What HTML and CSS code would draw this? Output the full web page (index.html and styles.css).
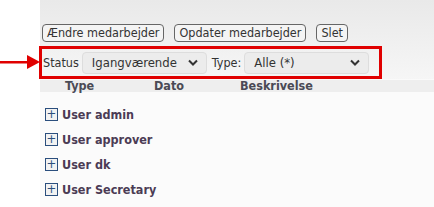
FILE: index.html
```html
<!DOCTYPE html>
<html lang="da">
<head>
    <meta charset="UTF-8">
    <title>Medarbejdere</title>
    <link rel="stylesheet" href="styles.css">
</head>
<body>
    <div class="gutter">
        <svg class="arrow" width="40" height="16" viewBox="0 0 40 16">
            <rect x="0" y="7" width="30" height="2.5" fill="#e00000"/>
            <polygon points="27,1 40,8 27,15" fill="#e00000"/>
        </svg>
    </div>
    <main class="content">
        <div class="toolbar">
            <button class="btn">Ændre medarbejder</button>
            <button class="btn">Opdater medarbejder</button>
            <button class="btn">Slet</button>
        </div>
        <div class="filters">
            <label for="status">Status</label>
            <select id="status" class="sel sel-status">
                <option>Igangværende</option>
            </select>
            <label for="type">Type:</label>
            <select id="type" class="sel sel-type">
                <option>Alle (*)</option>
            </select>
        </div>
        <div class="list-head">
            <span class="col-type">Type</span>
            <span class="col-date">Dato</span>
            <span class="col-desc">Beskrivelse</span>
        </div>
        <ul class="tree">
            <li><span class="plus">+</span>User admin</li>
            <li><span class="plus">+</span>User approver</li>
            <li><span class="plus">+</span>User dk</li>
            <li><span class="plus">+</span>User Secretary</li>
        </ul>
    </main>
</body>
</html>
```

FILE: styles.css
```css
body {
    margin: 0;
    display: flex;
    font-family: 'DejaVu Sans Condensed', 'DejaVu Sans', sans-serif;
    font-size: 12.5px;
    color: #333;
    background: #fff;
    height: 207px;
    overflow: hidden;
}
.gutter {
    width: 40px;
    flex: none;
    position: relative;
}
.arrow {
    position: absolute;
    left: 0;
    top: 54px;
}
.content {
    flex: 1;
    background: linear-gradient(#e9e9e9, #f6f6f6 80px, #fbfbfb 92px, #fbfbfb);
}
.toolbar {
    display: flex;
    gap: 10px;
    padding: 24px 0 0 2px;
}
.btn {
    font-family: inherit;
    font-size: 12.5px;
    color: #333;
    background: #f4f4f4;
    border: 1px solid #666;
    border-radius: 4px;
    height: 18px;
    padding: 0 4px;
    line-height: 16px;
}
.filters {
    display: flex;
    align-items: center;
    margin: 4px 52px 0 -1px;
    height: 27px;
    border: 3px solid #e00000;
    padding-left: 1px;
}
.filters label {
    margin-right: 3px;
}
.sel {
    font-family: inherit;
    font-size: 13px;
    color: #333;
    appearance: none;
    height: 22px;
    border: 1px solid #ddd;
    border-radius: 4px;
    padding: 0 24px 0 9px;
    background: #ececec url("data:image/svg+xml,%3Csvg xmlns='http://www.w3.org/2000/svg' width='10' height='7'%3E%3Cpath d='M1 1.5l4 4 4-4' fill='none' stroke='%23333' stroke-width='2'/%3E%3C/svg%3E") no-repeat right 8px center;
}
.sel-status {
    width: 125px;
    margin-right: 5px;
}
.sel-type {
    width: 125px;
}
.list-head {
    display: flex;
    font-weight: bold;
    color: #4a4a55;
    height: 12px;
    line-height: 11px;
    background: #eeeeee;
    border-top: 1px solid #fafafa;
}
.col-type { margin-left: 25px; width: 89px; }
.col-date { width: 86px; }
.tree {
    list-style: none;
    margin: 10px 0 0 5px;
    padding: 0;
}
.tree li {
    display: flex;
    align-items: center;
    height: 25px;
    font-weight: bold;
    color: #4b3b55;
}
.plus {
    width: 11px;
    height: 11px;
    border: 1px solid #2b4f7e;
    background: #f2f2f2;
    color: #2b4f7e;
    font-weight: normal;
    font-size: 13px;
    line-height: 10px;
    text-align: center;
    margin-right: 4px;
}
```
